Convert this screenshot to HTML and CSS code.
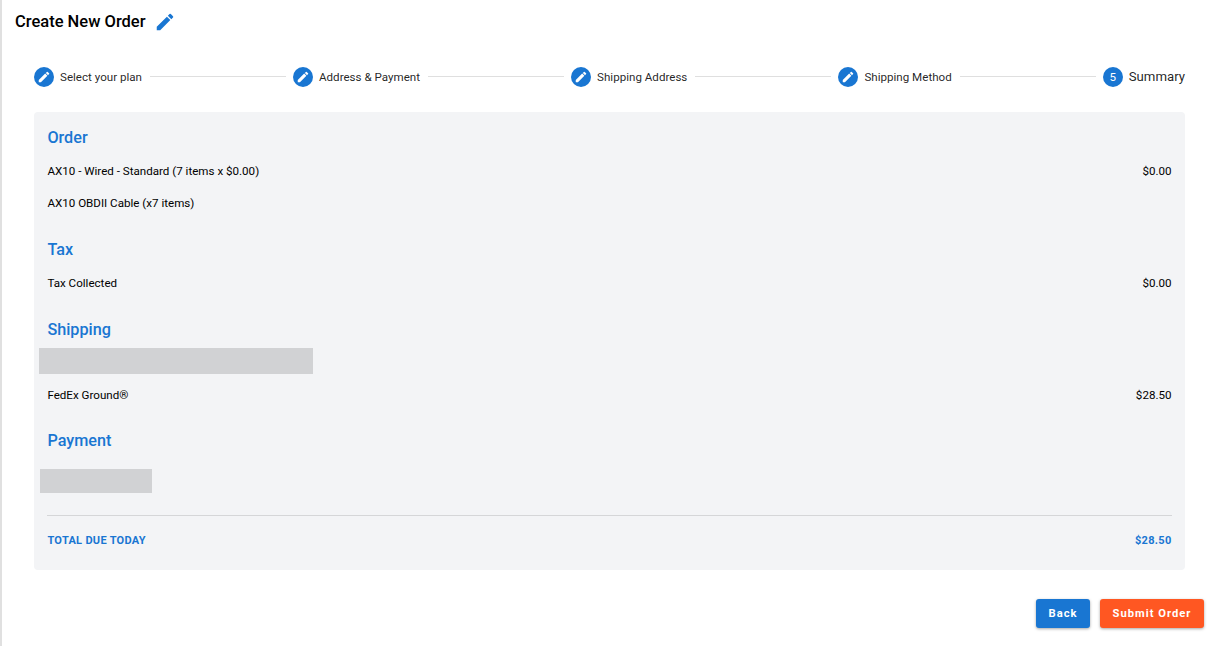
FILE: index.html
```html
<!DOCTYPE html>
<html lang="en">
<head>
<meta charset="utf-8">
<title>Create New Order</title>
<link rel="stylesheet" href="styles.css">
</head>
<body>
<main class="page">
  <header class="title-row">
    <h1 class="title">Create New Order</h1>
    <svg class="title-icon" viewBox="0 0 24 24"><path d="M3 17.25V21h3.75L17.81 9.94l-3.75-3.75L3 17.25zM20.71 7.04a1 1 0 0 0 0-1.41l-2.34-2.34a1 1 0 0 0-1.41 0l-1.83 1.83 3.75 3.75 1.83-1.83z"/></svg>
  </header>

  <nav class="stepper">
    <div class="step"><span class="badge"><svg viewBox="0 0 24 24"><path d="M3 17.25V21h3.75L17.81 9.94l-3.75-3.75L3 17.25zM20.71 7.04a1 1 0 0 0 0-1.41l-2.34-2.34a1 1 0 0 0-1.41 0l-1.83 1.83 3.75 3.75 1.83-1.83z"/></svg></span><span class="step-label">Select your plan</span></div>
    <div class="line"></div>
    <div class="step"><span class="badge"><svg viewBox="0 0 24 24"><path d="M3 17.25V21h3.75L17.81 9.94l-3.75-3.75L3 17.25zM20.71 7.04a1 1 0 0 0 0-1.41l-2.34-2.34a1 1 0 0 0-1.41 0l-1.83 1.83 3.75 3.75 1.83-1.83z"/></svg></span><span class="step-label">Address &amp; Payment</span></div>
    <div class="line"></div>
    <div class="step"><span class="badge"><svg viewBox="0 0 24 24"><path d="M3 17.25V21h3.75L17.81 9.94l-3.75-3.75L3 17.25zM20.71 7.04a1 1 0 0 0 0-1.41l-2.34-2.34a1 1 0 0 0-1.41 0l-1.83 1.83 3.75 3.75 1.83-1.83z"/></svg></span><span class="step-label">Shipping Address</span></div>
    <div class="line"></div>
    <div class="step"><span class="badge"><svg viewBox="0 0 24 24"><path d="M3 17.25V21h3.75L17.81 9.94l-3.75-3.75L3 17.25zM20.71 7.04a1 1 0 0 0 0-1.41l-2.34-2.34a1 1 0 0 0-1.41 0l-1.83 1.83 3.75 3.75 1.83-1.83z"/></svg></span><span class="step-label">Shipping Method</span></div>
    <div class="line"></div>
    <div class="step"><span class="badge">5</span><span class="step-label current">Summary</span></div>
  </nav>

  <section class="card">
    <h2 class="heading first">Order</h2>
    <div class="row"><span>AX10 - Wired - Standard (7 items x $0.00)</span><span>$0.00</span></div>
    <div class="row"><span>AX10 OBDII Cable (x7 items)</span></div>
    <h2 class="heading">Tax</h2>
    <div class="row"><span>Tax Collected</span><span>$0.00</span></div>
    <h2 class="heading">Shipping</h2>
    <div class="redact redact-address"></div>
    <div class="row row-shipping"><span>FedEx Ground®</span><span>$28.50</span></div>
    <h2 class="heading">Payment</h2>
    <div class="redact redact-payment"></div>
    <div class="total"><span>TOTAL DUE TODAY</span><span>$28.50</span></div>
  </section>

  <footer class="actions">
    <button class="btn btn-back" type="button">Back</button>
    <button class="btn btn-submit" type="button">Submit Order</button>
  </footer>
</main>
</body>
</html>
```
FILE: styles.css
```css
* { box-sizing: border-box; }
html, body { margin: 0; height: 100%; overflow: hidden; background: #fff; }
body { font-family: Roboto, "Liberation Sans", sans-serif; color: #000; }
.page { height: 646px; border-left: 2px solid #e0e0e0; display: flex; flex-direction: column; }
.title-row { display: flex; align-items: center; height: 24px; margin: 10px 0 0 13px; }
.title { margin: 0; font-size: 16.5px; font-weight: 500; line-height: 24px; }
.title-icon { width: 22px; height: 22px; margin-left: 8px; fill: #1976d2; }
.stepper { display: flex; align-items: center; margin: 33px 28px 0 32px; height: 20px; }
.step { display: flex; align-items: center; gap: 6px; flex: none; }
.badge { width: 20px; height: 20px; border-radius: 50%; background: #1976d2; color: #fff; font-size: 11.6px; display: flex; align-items: center; justify-content: center; }
.badge svg { width: 14px; height: 14px; fill: #fff; }
.step-label { font-size: 11.6px; line-height: 20px; color: rgba(0,0,0,.87); }
.step-label.current { font-size: 13.2px; }
.line { flex: 1; height: 1px; background: #dfdfdf; margin: 0 7px 1px 8px; }
.card { margin: 25px 28px 0 32px; height: 458px; padding: 14px 13.5px 0 13.4px; background: #f3f4f6; border-radius: 4px; font-size: 11.6px; }
.heading { margin: 18px 0 6px; font-size: 16.2px; font-weight: 500; line-height: 24px; color: #1976d2; }
.heading.first { margin-top: 0; }
.row { display: flex; justify-content: space-between; align-items: center; height: 32px; padding-bottom: 2px; }
.row-shipping { padding-bottom: 0; }
.redact { background: #d1d2d4; }
.redact-address { width: 274.5px; height: 26.5px; margin: -.5px 0 5px -8.9px; }
.redact-payment { width: 112px; height: 24px; margin-left: -7.9px; margin-top: 16px; }
.total { display: flex; justify-content: space-between; align-items: center; margin-top: 22px; height: 49px; border-top: 1px solid #d5d6d8; font-size: 11px; font-weight: 700; color: #1976d2; letter-spacing: .3px; }
.actions { display: flex; justify-content: flex-end; gap: 10px; margin: 29px 9px 0 0; }
.btn { height: 29px; border: 0; border-radius: 3px; color: #fff; font-family: inherit; font-size: 11.2px; font-weight: 700; letter-spacing: 1px; box-shadow: 0 1px 3px rgba(0,0,0,.35); padding: 0 0 1px; }
.btn-back { width: 54px; background: #1976d2; }
.btn-submit { width: 104px; background: #ff5722; }
```
